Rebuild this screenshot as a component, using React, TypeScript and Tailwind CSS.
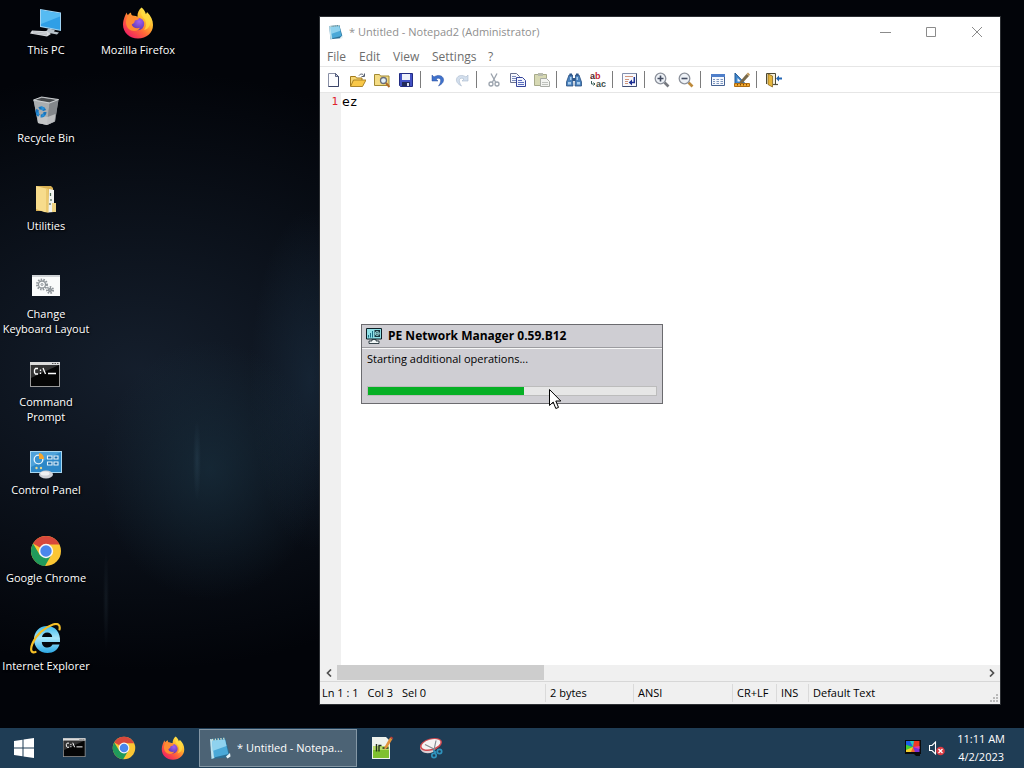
import { useState, type ReactNode } from "react";

interface IconProps {
  className?: string;
}

/* ---------- Application icons ---------- */

const ThisPcIcon = ({ className }: IconProps) => (
  <svg className={className} viewBox="0 0 32 32" aria-hidden="true">
    <path d="M10 2l21 3.500v18.500l-21-4z" fill="#9fd3f3" />
    <path d="M11 3.200l19 3.200v16.300l-19-3.700z" fill="#2f9fe6" />
    <path d="M11 3.200l19 3.200v3l-19 7.500z" fill="#56bbf2" />
    <path d="M18 21.500l7 1.300-1 1.700 5 1-2 2-13-2.500 3-1.500z" fill="#b9c3cb" />
    <path d="M2 23.500l15 .8 4 2.700-4 2.500-17-3z" fill="#d9dcdf" />
    <path d="M3 24.700l14 1.500M3 26l14 1.800" stroke="#a7adb2" strokeWidth=".6" />
  </svg>
);

const RecycleBinIcon = ({ className }: IconProps) => (
  <svg className={className} viewBox="0 0 32 32" aria-hidden="true">
    <path d="M3.500 5l8-3 17 2.500-3.500 22-8 3.500-9-2z" fill="#8d9195" />
    <path d="M3.500 5l16 3-2.500 22-9-2z" fill="#a9adb0" />
    <path d="M19.500 8l9-3.500-3.500 22-8 3.500z" fill="#83878b" />
    <path d="M7.500 20l10 2 8-3-1 7.500-7.500 3.500-9-2z" fill="#c9cbcc" opacity=".8" />
    <path d="M5 5l7-2.300 14.500 2.200-7.300 2.400z" fill="#46494c" />
    <path d="M3.500 5l8-3 17 2.500-9 3.500z" fill="none" stroke="#d5d8da" strokeWidth=".9" />
    <circle cx="11" cy="17" r="4" fill="none" stroke="#1674bd" strokeWidth="3" strokeDasharray="6.500 1.700" />
    <path d="M11 11l4 2-3 3zM6 18l3-1v4zM15 21l-4 1 2-4z" fill="#2990d8" />
  </svg>
);

const FolderIcon = ({ className }: IconProps) => (
  <svg className={className} viewBox="0 0 32 32" aria-hidden="true">
    <path d="M6 3h15l2 2v23H6z" fill="#d9b154" />
    <path d="M19 6l5 1v22l-6 .5z" fill="#f1f3ef" />
    <path d="M20.500 10v3M21 16v2M20 20v2" stroke="#4c6a55" strokeWidth="1.200" />
    <path d="M6 3l12 3v23.500l-4-.5-8-3z" fill="#f7dc8c" />
    <path d="M16 5.500l2.500.5v23.500l-2.500-.5z" fill="#ecca70" />
    <path d="M22 20h4v9h-4z" fill="#efd381" />
  </svg>
);

const Gear = ({ x, y, r }: { x: number; y: number; r: number }) => (
  <g transform={`translate(${x} ${y})`} fill="none" stroke="#8e9499">
    <circle r={r} strokeWidth="2" strokeDasharray="1.500 1.200" />
    <circle r={r - 1.500} strokeWidth="1.300" />
    <circle r="1" strokeWidth="1" />
  </g>
);

const BatchIcon = ({ className }: IconProps) => (
  <svg className={className} viewBox="0 0 32 32" aria-hidden="true">
    <path d="M2 4h28v21H2z" fill="#fafbfb" />
    <path d="M2 4h28v2H2z" fill="#cfd3d6" />
    <Gear x={12} y={13.500} r={5} />
    <Gear x={20} y={19} r={3} />
  </svg>
);

const CmdIcon = ({ className }: IconProps) => (
  <svg className={className} viewBox="0 0 32 32" aria-hidden="true">
    <path d="M0 3h30v25H0z" fill="#9b9b9b" />
    <path d="M1 6h28v21H1z" fill="#050505" />
    <path d="M1 6h28L1 19z" fill="#333" />
    <path d="M0 3h30v3H0z" fill="#dcdcdc" />
    <path d="M22 4h1.500v1H22zM24.500 4H26v1h-1.500zM27 4h1.500v1H27z" fill="#555" />
    <path
      d="M8 9.500H5.500L4.500 11v2.500L5.500 15H8M10.500 10.500V12M10.500 13.500V15M13 9l2.500 6M18 14.500h8"
      fill="none"
      stroke="#fff"
      strokeWidth="1.300"
    />
  </svg>
);

const ControlPanelIcon = ({ className }: IconProps) => (
  <svg className={className} viewBox="0 0 32 32" aria-hidden="true">
    <path d="M0 4h32v22H0z" fill="#a8d6ef" />
    <path d="M1 5h30v20H1z" fill="#2d88c8" />
    <path d="M1 5h30L1 20z" fill="#4ea2da" />
    <circle cx="8.500" cy="12.500" r="4.300" fill="#3a93d0" stroke="#e6f3fa" strokeWidth="1.300" />
    <path d="M9 12V6a5.500 5.500 0 0 1 5 6z" fill="#f6a62c" />
    <path
      d="M17.500 9h4.500v3h-4.500zM24 9h4v3h-4zM17.500 15h4.500v3h-4.500zM24 15h4v3h-4z"
      fill="#1c6dad"
      stroke="#e6f3fa"
      strokeWidth="1.100"
    />
    <circle cx="6.500" cy="21" r="1.200" fill="#e7d88b" />
    <circle cx="11" cy="21" r="1.200" fill="#e7d88b" />
    <ellipse cx="16" cy="27.500" rx="7" ry="4" fill="#cfd1d6" />
    <ellipse cx="15" cy="26.500" rx="4.500" ry="2" fill="#f1f2f3" />
  </svg>
);

const ChromeIcon = ({ className }: IconProps) => (
  <svg className={className} viewBox="0 0 32 32" aria-hidden="true">
    <circle cx="16" cy="16" r="15" fill="#fbc634" />
    <path d="M16 16L3 8.500A15 15 0 0 1 29 8.500L29.500 9.500H16z" fill="#d8483c" />
    <path d="M3 8.500L9.700 19.800 16 22.500 21.600 19.500 15 31A15 15 0 0 1 3 8.500z" fill="#209a5b" />
    <circle cx="16" cy="16" r="7.200" fill="#f7f7f7" />
    <circle cx="16" cy="16" r="5.700" fill="#4a86ec" />
  </svg>
);

const FirefoxIcon = ({ className }: IconProps) => (
  <svg className={className} viewBox="0 0 32 32" aria-hidden="true">
    <defs>
      <linearGradient id="fx-body" x1=".85" y1=".1" x2=".2" y2=".9">
        <stop offset="0" stopColor="#fff04f" />
        <stop offset=".35" stopColor="#ffb32c" />
        <stop offset=".65" stopColor="#ff6539" />
        <stop offset="1" stopColor="#f1265f" />
      </linearGradient>
      <radialGradient id="fx-globe" cx=".6" cy=".3" r=".8">
        <stop offset="0" stopColor="#a161f0" />
        <stop offset="1" stopColor="#5533aa" />
      </radialGradient>
    </defs>
    <path
      d="M19.500.5c2 1.500 4 4 4.300 6.500 1-.7 1.200-2 1.200-2 4 4 6 8 6 13 0 8-6.500 13.500-15 13.500S1 25.500 1 17.500C1 12.500 3.500 8 4.500 5.500c.3 1.200.8 2 1.500 2.700C6.500 7 8 5.800 9 5.500c0 1.500.5 2.800 1.500 3.500 2-.4 3.500 0 5 .8C15.200 6 17 2.500 19.500.5z"
      fill="url(#fx-body)"
    />
    <circle cx="16" cy="17" r="6.200" fill="url(#fx-globe)" />
    <path
      d="M6 9c3-1 6-.5 8 1 1.500 0 3 .5 3 1.500-1 1.500-3 1.500-4.300 2.300.2 2-1 2.700-3.200 3.700 1 3 5 4.500 8.500 3.200-2 3.800-8 4.300-11.500 1C3.500 18.500 3 13 6 9z"
      fill="#ff8c33"
    />
    <path d="M20 3c-2 4 0 6 2.500 9 2.500 4 2 8-.5 11 5-1 7-5.500 6-10-1-4-6-5-8-10z" fill="#ffdf42" opacity=".75" />
  </svg>
);

const InternetExplorerIcon = ({ className }: IconProps) => (
  <svg className={className} viewBox="0 0 32 32" aria-hidden="true">
    <defs>
      <linearGradient id="ie-body" x1="0" y1="0" x2="0" y2="1">
        <stop offset="0" stopColor="#3fb9ec" />
        <stop offset=".45" stopColor="#a8e7fb" />
        <stop offset="1" stopColor="#2ca8e4" />
      </linearGradient>
    </defs>
    <path
      d="M17 3C9 3 4 9 4 16.500S9.500 30 17.500 30c6 0 10.500-3.500 12-8.500h-7c-1 2-2.700 3-5 3-3.500 0-5.500-2-5.700-5.500H30C30.700 9.500 25.500 3 17 3zm-5 11c.5-3 2.500-4.500 5.200-4.500 2.800 0 4.800 1.500 5 4.500z"
      fill="url(#ie-body)"
      fillRule="evenodd"
    />
    <path
      d="M29.500 6.500C30.500 2 28 0 23 1.500 15 4 6 12 2.500 20.500 0 26.500 1 30.500 5.500 29"
      fill="none"
      stroke="#f4bf27"
      strokeWidth="2.200"
      strokeLinecap="round"
    />
  </svg>
);

const NotepadIcon = ({ className }: IconProps) => (
  <svg className={className} viewBox="0 0 24 24" aria-hidden="true">
    <path d="M2 3l15-1.500L21.500 18l-3 3.500L3.500 23z" fill="#2c6f94" />
    <path d="M2 3l3 .5L6.500 22l-3 1z" fill="#bfe3ee" />
    <path d="M4 4.500l13-1L20.500 18 6 21.500z" fill="#4aa9d8" />
    <path d="M4 4.500l13-1 1.500 6.500-14 5z" fill="#8fd2ee" />
    <path d="M4 3.800l13-1.300" stroke="#d9ddc8" strokeWidth="1.800" strokeDasharray="1.300 1.500" />
    <path d="M18 20.500l4-3.500.5 3.500-3 2z" fill="#e8f4f8" />
  </svg>
);

const NotepadPlusIcon = ({ className }: IconProps) => (
  <svg className={className} viewBox="0 0 24 24" aria-hidden="true">
    <path d="M2 1h14l4 4v18H2z" fill="#eef2ec" />
    <path d="M3 14h16v8H3z" fill="#7fc02f" />
    <path d="M3 10h16v4H3z" fill="#b8dc66" />
    <path d="M6.500 8v7.500M9 15.500V9.500h2.500" fill="none" stroke="#25331f" strokeWidth="1.400" />
    <path d="M12.500 12H15M16 12h2.500" stroke="#25331f" strokeWidth="1.600" />
    <path d="M14.500 11L20 1.500l2.500 1.500L17 12l-2.500 1.500z" fill="#e0913a" />
    <path d="M20 1.500L21 .5 23.300 2l-.8 1z" fill="#c33d38" />
  </svg>
);

const SnippingIcon = ({ className }: IconProps) => (
  <svg className={className} viewBox="0 0 24 24" aria-hidden="true">
    <path d="M1 11c0 5 6 8 13 5l8-9v-2z" fill="#dccfd3" />
    <ellipse cx="12" cy="8.500" rx="11.300" ry="6" transform="rotate(-16 12 8.500)" fill="#cf4a50" />
    <ellipse cx="12" cy="8.300" rx="9.800" ry="4.700" transform="rotate(-16 12 8.300)" fill="#f5f3f3" />
    <path d="M6 8.500l9 4.500M17 4.500L15 14" stroke="#858b91" strokeWidth="1.200" />
    <circle cx="15" cy="19.500" r="2.200" fill="none" stroke="#2f93bd" strokeWidth="1.700" />
    <circle cx="20.500" cy="15.500" r="2.200" fill="none" stroke="#2f93bd" strokeWidth="1.700" />
    <path d="M13.500 13l4.500 3-2.500 2z" fill="#2f93bd" />
  </svg>
);

const WindowsIcon = ({ className }: IconProps) => (
  <svg className={className} viewBox="0 0 24 24" aria-hidden="true" fill="#fff">
    <path d="M2 5l8.500-1.300v7.800H2zM11.500 3.500L22 2v9.500H11.500zM2 12.500h8.500v7.800L2 19zM11.500 12.500H22V22l-10.500-1.500z" />
  </svg>
);

const NetworkManagerIcon = ({ className }: IconProps) => (
  <svg className={className} viewBox="0 0 16 16" aria-hidden="true">
    <path d="M.5.500h15v10.500H.5z" fill="#8fe0e6" stroke="#0b1d24" />
    <path d="M2.500 9.500V7M4.500 9.500V5M6.500 9.500V3" stroke="#1c6f86" />
    <path d="M8.500 2H14v7H8.500z" fill="#17333c" />
    <circle cx="11.200" cy="5.500" r="2" fill="none" stroke="#a9eef0" strokeWidth=".8" />
    <path d="M9 5.500h4.500M11.200 3.500v4" stroke="#a9eef0" strokeWidth=".6" />
    <path d="M6 11.500h4V13h3v2.500H3V13h3z" fill="#f2f7f7" stroke="#0b1d24" strokeWidth=".8" />
  </svg>
);

/* ---------- Toolbar glyphs, all on a 16px grid ---------- */

const glyphs: Record<string, ReactNode> = {
  New: (
    <>
      <path d="M2.500 1.500h7l3 3v10h-10z" fill="#fdfdff" stroke="#8a90a6" />
      <path d="M12.500 4.500v10h-10" fill="none" stroke="#3a4468" />
      <path d="M9.500 1.500v3h3z" fill="#cdd4e6" stroke="#3a4468" strokeWidth=".8" />
    </>
  ),
  Open: (
    <>
      <path d="M.5 14V4.500h5l1 1.500H12v3" fill="#f7d774" stroke="#a37b1d" />
      <path d="M.5 14.500l3-6.500H16l-3.500 6.500z" fill="#f9c848" stroke="#a37b1d" strokeWidth=".9" />
      <path d="M9 3.500c1.500-2 4-2 5 .5M14.500 1.500v3h-3" fill="none" stroke="#555f70" />
    </>
  ),
  Browse: (
    <>
      <path d="M.5 13.500v-11h5l1 1.500H15v9.500z" fill="#f4dc84" stroke="#a38a33" />
      <circle cx="9.500" cy="8.500" r="3" fill="#e4f1f9" stroke="#6a6f7c" strokeWidth="1.300" />
      <path d="M12 11l3.500 4" stroke="#b06b28" strokeWidth="2" />
    </>
  ),
  Save: (
    <>
      <path d="M1.500 1.500h13v13h-12l-1-1z" fill="#4251c4" stroke="#222c82" />
      <path d="M4 2h8v6H4z" fill="#edf0fa" />
      <path d="M4 10h8v4H4z" fill="#232b58" />
      <path d="M9 11h2v3H9z" fill="#dfe3f4" />
    </>
  ),
  Undo: (
    <path d="M2 3v6h6L6 7c3-2 5.500 0 4.500 3-.3 1.500-1 2.500-2 4 4-2 5.500-4.500 5-7-1-4-6-4.500-9.500-2z" fill="#3f72cc" stroke="#2a4f9c" strokeWidth=".5" />
  ),
  Redo: (
    <path d="M14 3v6H8l2-2C7 5 4.500 7 5.500 10c.3 1.500 1 2.500 2 4-4-2-5.500-4.500-5-7 1-4 6-4.500 9.500-2z" fill="#d3dfed" stroke="#a9b9cc" strokeWidth=".6" />
  ),
  Cut: (
    <g fill="none" stroke="#9ba3ad" strokeWidth="1.300">
      <path d="M5 1.500L9.500 10M11 1.500L6.500 10" />
      <circle cx="5" cy="12" r="2" />
      <circle cx="11" cy="12" r="2" />
    </g>
  ),
  Copy: (
    <>
      <path d="M.5 1.500h6l3 3v6h-9z" fill="#f6f8fd" stroke="#6a7290" />
      <path d="M2 4.500h4M2 6.500h5M2 8.500h5" stroke="#7d8dbd" />
      <path d="M6.500 5.500h6l3 3v6h-9z" fill="#f1f4fd" stroke="#35449a" />
      <path d="M8 8.500h4M8 10.500h6M8 12.500h6" stroke="#5b6ebe" />
    </>
  ),
  Paste: (
    <>
      <path d="M.5 2.500h12v11H.5z" fill="#d7d9b4" stroke="#a7aa8a" />
      <path d="M4 1h5v3H4z" fill="#b9bcae" />
      <path d="M6.500 6.500h6l3 3v5h-9z" fill="#f3f4f1" stroke="#a9aca6" />
      <path d="M8 10.500h6M8 12.500h6" stroke="#bfc2bd" />
    </>
  ),
  Find: (
    <>
      <path d="M3 3h3.500v3L7 14H.5V10zM9.500 3H13l2.500 7v4H9l.5-8z" fill="#4a82bd" stroke="#2a4f80" strokeWidth=".8" />
      <path d="M3.500 1.500h2.500v2H3.500zM10 1.500h2.500v2H10zM6.500 6h3v3h-3z" fill="#2f5688" />
      <path d="M2 10h3v2.500H2zM11 10h3v2.500h-3zM4 5h1.500v3H4zM10.500 5H12v3h-1.500z" fill="#a9cdee" />
    </>
  ),
  Replace: (
    <>
      <text x="0" y="7" fontSize="9" fontWeight="700" fontFamily="Liberation Sans, sans-serif" fill="#4b2328">a</text>
      <text x="5" y="7" fontSize="9" fontWeight="700" fontFamily="Liberation Sans, sans-serif" fill="#c61f33">b</text>
      <text x="6" y="15" fontSize="9" fontWeight="700" fontFamily="Liberation Sans, sans-serif" fill="#41504b">ac</text>
      <path d="M1.500 9v3H5M3.500 10.500L5 12l-1.500 1.500" fill="none" stroke="#3b5d58" />
    </>
  ),
  "Word wrap": (
    <>
      <path d="M.5 1.500h14v13H.5z" fill="#f8f9fd" stroke="#8590ad" />
      <path d="M14.500 1.500v13H.5" fill="none" stroke="#3e4b70" />
      <path d="M3 4.500h8M3 7.500h4M3 9.500h3M3 11.500h3" stroke="#d0957c" />
      <path d="M12.300 5v5.500H9" fill="none" stroke="#1d2f93" strokeWidth="1.500" />
      <path d="M10 7.500v6l-3.300-3z" fill="#1d2f93" />
    </>
  ),
  "Zoom in": (
    <>
      <path d="M10.500 10.500l4 4" stroke="#777a80" strokeWidth="2.600" />
      <circle cx="6.500" cy="6.500" r="5.300" fill="#eef2f7" stroke="#8d929c" strokeWidth="1.300" />
      <path d="M3.500 6.500h6M6.500 3.500v6" stroke="#434c61" strokeWidth="1.600" />
    </>
  ),
  "Zoom out": (
    <>
      <path d="M10.500 10.500l4 4" stroke="#bd8a3b" strokeWidth="2.600" />
      <circle cx="6.500" cy="6.500" r="5.300" fill="#eef2f7" stroke="#8d929c" strokeWidth="1.300" />
      <path d="M3.500 6.500h6" stroke="#434c61" strokeWidth="1.600" />
    </>
  ),
  Scheme: (
    <>
      <path d="M1.500 2.500h13v11h-13z" fill="#f5f8fd" stroke="#446192" />
      <path d="M1 2h14v3H1z" fill="#4f7fca" />
      <path d="M3 7.500h2M3 9.500h2M3 11.500h2M6.500 7.500H9M6.500 9.500H9M6.500 11.500H9M10.500 7.500H13M10.500 9.500H13M10.500 11.500H13" stroke="#7d96bf" />
    </>
  ),
  Customize: (
    <>
      <path d="M1 1v10.500h10z" fill="#3f86cc" stroke="#245a96" />
      <path d="M3.500 6v3.500H7z" fill="#f4f7fb" />
      <path d="M6 9.500l6.500-7.500 2.500 2-6.500 7-3 1z" fill="#7a6a4a" />
      <path d="M12.500 2L14 .5 16 2.500 15 4z" fill="#c29a5c" />
      <path d="M.5 11.500h15v3H.5z" fill="#f3a82c" stroke="#b06d13" />
      <path d="M3.500 12v1.500M6.500 12v1.500M9.500 12v1.500M12.500 12v1.500" stroke="#7b4a0c" />
    </>
  ),
  Exit: (
    <>
      <path d="M.5 12V1.500h9V12" fill="#f5f0dc" stroke="#4e4a34" />
      <path d="M2 2l4.500 2v11L2 12.500z" fill="#e6b63c" stroke="#7c5a12" strokeWidth=".7" />
      <path d="M7 12.500h5" stroke="#55523f" strokeWidth="1.200" />
      <path d="M10 6.500L13 3.500v2h3v2h-3v2z" fill="#2466b4" />
    </>
  ),
};

const toolbarGroups = [
  ["New", "Open", "Browse", "Save"],
  ["Undo", "Redo"],
  ["Cut", "Copy", "Paste"],
  ["Find", "Replace"],
  ["Word wrap"],
  ["Zoom in", "Zoom out"],
  ["Scheme", "Customize"],
  ["Exit"],
];

const shortcuts = [
  { label: "This PC", Icon: ThisPcIcon },
  { label: "Recycle Bin", Icon: RecycleBinIcon },
  { label: "Utilities", Icon: FolderIcon },
  { label: "Change\nKeyboard Layout", Icon: BatchIcon },
  { label: "Command\nPrompt", Icon: CmdIcon },
  { label: "Control Panel", Icon: ControlPanelIcon },
  { label: "Google Chrome", Icon: ChromeIcon },
  { label: "Internet Explorer", Icon: InternetExplorerIcon },
  { label: "Mozilla Firefox", Icon: FirefoxIcon },
];

const pinned = [
  { label: "Command Prompt", Icon: CmdIcon },
  { label: "Google Chrome", Icon: ChromeIcon },
  { label: "Mozilla Firefox", Icon: FirefoxIcon },
];

const Shortcuts = () => (
  <div className="grid w-fit auto-cols-[92px] grid-flow-col grid-rows-[repeat(8,88px)]">
    {shortcuts.map(({ label, Icon }) => (
      <button key={label} className="flex flex-col items-center pt-[7px]">
        <Icon className="h-8 w-8 shrink-0" />
        <span className="mt-[3px] whitespace-pre text-center text-[11px] leading-[15px] text-white [text-shadow:1px_1px_2px_#000]">
          {label}
        </span>
      </button>
    ))}
  </div>
);

const TitleBar = () => (
  <div className="flex h-[30px] items-center pl-2">
    <NotepadIcon className="h-4 w-4" />
    <h1 className="ml-[5px] flex-1 truncate text-[11px] text-[#8f8f8f]">
      * Untitled - Notepad2 (Administrator)
    </h1>
    <button aria-label="Minimize" className="flex h-full w-[46px] items-center justify-center">
      <svg className="h-[11px] w-[11px]" viewBox="0 0 11 11">
        <path d="M0 5.500h11" stroke="#8b8b8b" />
      </svg>
    </button>
    <button aria-label="Maximize" className="flex h-full w-[46px] items-center justify-center">
      <svg className="h-[11px] w-[11px]" viewBox="0 0 11 11">
        <path d="M.5.500h9v9H.5z" fill="none" stroke="#8b8b8b" />
      </svg>
    </button>
    <button aria-label="Close" className="flex h-full w-[46px] items-center justify-center">
      <svg className="h-[11px] w-[11px]" viewBox="0 0 11 11">
        <path d="M0 0l10 10M10 0L0 10" stroke="#8b8b8b" />
      </svg>
    </button>
  </div>
);

const Toolbar = () => (
  <div role="toolbar" className="flex h-[27px] items-center border-y border-[#e6e6e6] pl-[2px]">
    {toolbarGroups.map((group, index) => (
      <div key={group[0]} className="flex items-center">
        {index > 0 && <div className="mr-[5px] ml-[2px] h-[17px] w-px bg-[#7c7c7c]" />}
        {group.map((name) => (
          <button key={name} aria-label={name} className="flex h-6 w-6 items-center justify-center">
            <svg className="h-4 w-4" viewBox="0 0 16 16">
              {glyphs[name]}
            </svg>
          </button>
        ))}
      </div>
    ))}
  </div>
);

const ScrollBar = () => (
  <div className="flex h-4 bg-[#f0f0f0]">
    <button aria-label="Scroll left" className="flex w-[17px] items-center justify-center">
      <svg className="h-2 w-2" viewBox="0 0 8 8">
        <path d="M6 .5L2.500 4 6 7.500" fill="none" stroke="#505050" strokeWidth="1.700" />
      </svg>
    </button>
    <div className="flex-1">
      <div className="h-[15px] w-[32%] bg-[#cdcdcd]" />
    </div>
    <button aria-label="Scroll right" className="flex w-[17px] items-center justify-center">
      <svg className="h-2 w-2" viewBox="0 0 8 8">
        <path d="M2 .5L5.500 4 2 7.500" fill="none" stroke="#505050" strokeWidth="1.700" />
      </svg>
    </button>
  </div>
);

const StatusBar = () => (
  <div className="flex h-[23px] items-center border-t border-[#d7d7d7] bg-[#f0f0f0] text-[11px] leading-[18px] whitespace-pre text-black">
    <div className="flex flex-1 gap-[9px] pl-[2px]">
      <span>Ln 1 : 1</span>
      <span>Col 3</span>
      <span>Sel 0</span>
    </div>
    <span className="w-[88px] border-l border-[#dadada] pl-1">2 bytes</span>
    <span className="w-[99px] border-l border-[#dadada] pl-1">ANSI</span>
    <span className="w-11 border-l border-[#dadada] pl-1">CR+LF</span>
    <span className="w-8 border-l border-[#dadada] pl-1">INS</span>
    <span className="w-[180px] border-l border-[#dadada] pl-1">Default Text</span>
    <svg className="h-3 w-3 self-end" viewBox="0 0 12 12" fill="#b9b9b9">
      <path d="M8 2h2v2H8zM5 5h2v2H5zM8 5h2v2H8zM2 8h2v2H2zM5 8h2v2H5zM8 8h2v2H8z" />
    </svg>
  </div>
);

const NotepadWindow = () => {
  const [text, setText] = useState("ez");

  return (
    <section className="absolute top-[17px] right-6 bottom-6 left-80 flex flex-col bg-white shadow-[0_0_0_1px_#2c2f33]">
      <TitleBar />
      <nav className="flex h-[19px] items-center pl-[7px] text-[12px] text-[#6d6d6d]">
        <button className="w-8 text-left">File</button>
        <button className="w-[34px] text-left">Edit</button>
        <button className="w-[39px] text-left">View</button>
        <button className="w-14 text-left">Settings</button>
        <button>?</button>
      </nav>
      <Toolbar />
      <div className="flex min-h-0 flex-1 font-['DejaVu_Sans_Mono',monospace] text-[13px] leading-[18px]">
        <div className="w-[21px] bg-[#f0f0f0] pr-[3px] text-right text-[11px] text-[#e0222c]">
          {text.split("\n").map((_, line) => (
            <div key={line}>{line + 1}</div>
          ))}
        </div>
        <textarea
          aria-label="Document"
          spellCheck={false}
          className="flex-1 resize-none pl-px text-black outline-none"
          value={text}
          onChange={(e) => setText(e.target.value)}
        />
      </div>
      <ScrollBar />
      <StatusBar />
    </section>
  );
};

const NetworkDialog = () => (
  <section className="absolute inset-0 m-auto h-20 w-[302px] border border-[#6b6b6f] bg-[#cfced3] text-black">
    <div className="flex h-[23px] items-center gap-[6px] border-b border-[#9c9ca0] pl-1 shadow-[0_1px_0_#f7f7f7]">
      <NetworkManagerIcon className="h-4 w-4" />
      <h2 className="text-[12px] font-bold">PE Network Manager 0.59.B12</h2>
    </div>
    <label htmlFor="progress" className="block px-[5px] pt-[3px] text-[11px] leading-[16px]">
      Starting additional operations...
    </label>
    <progress
      id="progress"
      max={100}
      value={54}
      className="mx-[5px] mt-[19px] block h-[10px] w-[290px] appearance-none border border-[#bcbcbc] [&::-webkit-progress-bar]:bg-[#e6e6e6] [&::-webkit-progress-value]:bg-[#06b025]"
    />
  </section>
);

const Taskbar = () => (
  <footer className="flex h-10 items-center gap-px bg-[#1f3d55] text-[11px] text-white">
    <button aria-label="Start" className="flex h-full w-[50px] items-center justify-center pr-[2px]">
      <WindowsIcon className="h-6 w-6" />
    </button>
    {pinned.map(({ label, Icon }) => (
      <button key={label} aria-label={label} className="flex h-full w-12 items-center justify-center">
        <Icon className="h-6 w-6" />
      </button>
    ))}
    <button className="ml-px flex h-[38px] w-[158px] items-center gap-[5px] border border-[#8497a5] bg-[#4c6375] px-2">
      <NotepadIcon className="h-6 w-6 shrink-0" />
      <span className="whitespace-nowrap">* Untitled - Notepa...</span>
    </button>
    <button aria-label="Notepad++" className="flex h-full w-12 items-center justify-center">
      <NotepadPlusIcon className="h-6 w-6" />
    </button>
    <button aria-label="Snipping Tool" className="flex h-full w-12 items-center justify-center">
      <SnippingIcon className="h-6 w-6" />
    </button>
    <div className="ml-auto flex h-full items-center gap-2 pr-[19px]">
      <button aria-label="Display">
        <svg className="h-4 w-4" viewBox="0 0 16 16">
          <path d="M0 0h16v14h-1v2h-4l-2-2H0z" fill="#0a0a0a" />
          <path d="M1 1h7v6H1z" fill="#1fbf3f" />
          <path d="M1 1h4l3 6-7-2z" fill="#1d5ce8" />
          <path d="M8 1h6.500v6H8z" fill="#ee3a24" />
          <path d="M5 1h4L8 7z" fill="#25c9c4" />
          <path d="M1 7h7v5H1z" fill="#f2cf2b" />
          <path d="M1 5l7 2-7 3z" fill="#3fcf36" />
          <path d="M8 7h6.500v5H8z" fill="#7e2fd6" />
          <path d="M8 7l-2 5h4z" fill="#f2652a" />
          <path d="M8 7l6.500-1v3z" fill="#e83aa6" />
        </svg>
      </button>
      <button aria-label="Volume muted">
        <svg className="h-4 w-4" viewBox="0 0 16 16">
          <path d="M.5 5.500H3l3.500-3.500v12L3 10.500H.5z" fill="none" stroke="#fff" strokeWidth="1.100" />
          <circle cx="11.500" cy="11" r="4.300" fill="#dc3a42" />
          <path d="M9.500 9l4 4M13.500 9l-4 4" stroke="#fff" strokeWidth="1.300" />
        </svg>
      </button>
      <button className="ml-1 text-center leading-[18px]">
        <span className="block">11:11 AM</span>
        <span className="block">4/2/2023</span>
      </button>
    </div>
  </footer>
);

export default function App() {
  return (
    <div className="flex h-screen flex-col overflow-hidden bg-[#020409] font-['Open_Sans','Noto_Sans',sans-serif]">
      <main className="relative flex-1 bg-[radial-gradient(ellipse_4px_40px_at_197px_460px,#35526550,transparent),radial-gradient(ellipse_3px_50px_at_106px_600px,#2a384450,transparent),radial-gradient(ellipse_110px_130px_at_210px_470px,#1b354590,transparent),radial-gradient(ellipse_60px_170px_at_310px_380px,#1d334880,transparent),radial-gradient(ellipse_420px_300px_at_140px_370px,#172231e0,transparent)]">
        <Shortcuts />
        <NotepadWindow />
        <NetworkDialog />
        {/* Mouse pointer */}
        <svg className="pointer-events-none absolute top-[389px] left-[549px] h-[21px] w-3" viewBox="0 0 12 21">
          <path d="M.5.500v16l3.700-3.500 2.600 6.500 2.700-1.100-2.700-6.400h5z" fill="#fff" stroke="#000" />
        </svg>
      </main>
      <Taskbar />
    </div>
  );
}
